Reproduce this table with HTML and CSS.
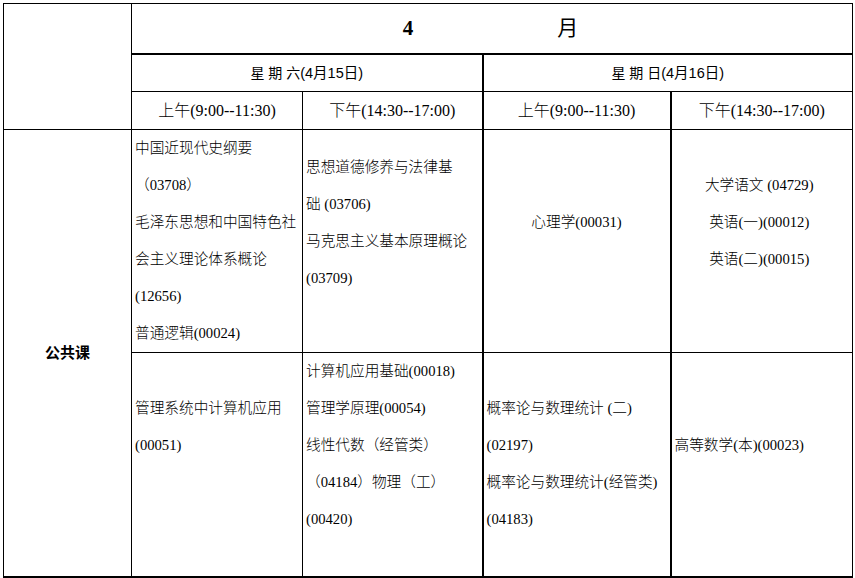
FILE: index.html
```html
<!DOCTYPE html>
<html lang="zh-CN">
<head>
<meta charset="utf-8">
<title>考试安排</title>
<link rel="stylesheet" href="styles.css">
</head>
<body>
<div class="page">
<table class="sched">
<colgroup>
<col class="c-cat"><col class="c-sat-am"><col class="c-sat-pm"><col class="c-sun-am"><col class="c-sun-pm">
</colgroup>
<tr class="r-month">
<td class="corner" rowspan="3"></td>
<td class="month" colspan="4"><span class="num">4</span><span class="mon">月</span></td>
</tr>
<tr class="r-day">
<td class="day sat" colspan="2">星 期 六<span class="date">(4月15日)</span></td>
<td class="day" colspan="2">星 期 日<span class="date">(4月16日)</span></td>
</tr>
<tr class="r-slot">
<td class="slot">上午(9:00--11:30)</td>
<td class="slot sat-end">下午(14:30--17:00)</td>
<td class="slot sun-am">上午(9:00--11:30)</td>
<td class="slot">下午(14:30--17:00)</td>
</tr>
<tr class="r-body1">
<td class="cat" rowspan="2">公共课</td>
<td class="cell">中国近现代史纲要<br>（03708）<br>毛泽东思想和中国特色社<br>会主义理论体系概论<br>(12656)<br>普通逻辑(00024)</td>
<td class="cell sat-end lift1">思想道德修养与法律基<br>础 (03706)<br>马克思主义基本原理概论<br>(03709)</td>
<td class="cell sun-am center lift1">心理学(00031)</td>
<td class="cell center lift1 shift">大学语文 (04729)<br>英语(一)(00012)<br>英语(二)(00015)</td>
</tr>
<tr class="r-body2">
<td class="cell last lift2">管理系统中计算机应用<br>(00051)</td>
<td class="cell sat-end last lift1">计算机应用基础(00018)<br>管理学原理(00054)<br>线性代数（经管类）<br>（04184）物理（工）<br>(00420)</td>
<td class="cell sun-am last">概率论与数理统计 (二)<br>(02197)<br>概率论与数理统计(经管类)<br>(04183)</td>
<td class="cell last lift1">高等数学(本)(00023)</td>
</tr>
</table>
</div>
</body>
</html>
```

FILE: styles.css
```css
html, body {
  margin: 0;
  padding: 0;
  background: #fff;
}

body {
  font-family: "Liberation Serif", "Noto Sans CJK SC", serif;
  font-weight: 300;
  color: #000;
}

.page {
  padding: 3px 0 0 3px;
}

.sched {
  border-collapse: collapse;
  table-layout: fixed;
  width: 850px;
}

.c-cat { width: 128px; }
.c-sat-am { width: 171px; }
.c-sat-pm { width: 180px; }
.c-sun-am { width: 188px; }
.c-sun-pm { width: 182px; }

.sched td {
  border: 1px solid #000;
  padding: 0 3px;
  vertical-align: middle;
  text-align: left;
  white-space: nowrap;
  overflow: hidden;
}

.r-month { height: 50px; }
.r-day { height: 38px; }
.r-slot { height: 38px; }
.r-body1 { height: 223px; }
.r-body2 { height: 224px; }

.month {
  border-bottom: 2px solid #000 !important;
  text-align: center !important;
  font-size: 21px;
  line-height: 20px;
  padding-right: 6px !important;
}

.month .num {
  font-weight: bold;
}

.month .mon {
  margin-left: 144px;
  font-weight: 400;
}

.day {
  text-align: center !important;
  font-family: "Liberation Sans", "Noto Sans CJK SC", sans-serif;
  font-weight: 400;
  font-size: 14px;
  line-height: 18px;
}

.day .date {
  font-size: 14.5px;
}

.slot {
  text-align: center !important;
  font-size: 16px;
  line-height: 20px;
}

.sat {
  border-right: 2px solid #000 !important;
}

.sat-end {
  border-right: 2px solid #000 !important;
}

.sun-am {
  border-right: 2px solid #000 !important;
}

.cat {
  text-align: center !important;
  font-family: "Liberation Sans", "Noto Sans CJK SC", sans-serif;
  font-weight: bold;
  font-size: 15px;
  line-height: 20px;
  border-bottom: 2px solid #000 !important;
}

.cell {
  font-size: 14.67px;
  line-height: 37px;
}

.center {
  text-align: center !important;
}

.shift {
  padding-right: 8px !important;
}

.last {
  border-bottom: 2px solid #000 !important;
}

.lift1 {
  padding-bottom: 37px !important;
}

.lift2 {
  padding-bottom: 74px !important;
}
```
